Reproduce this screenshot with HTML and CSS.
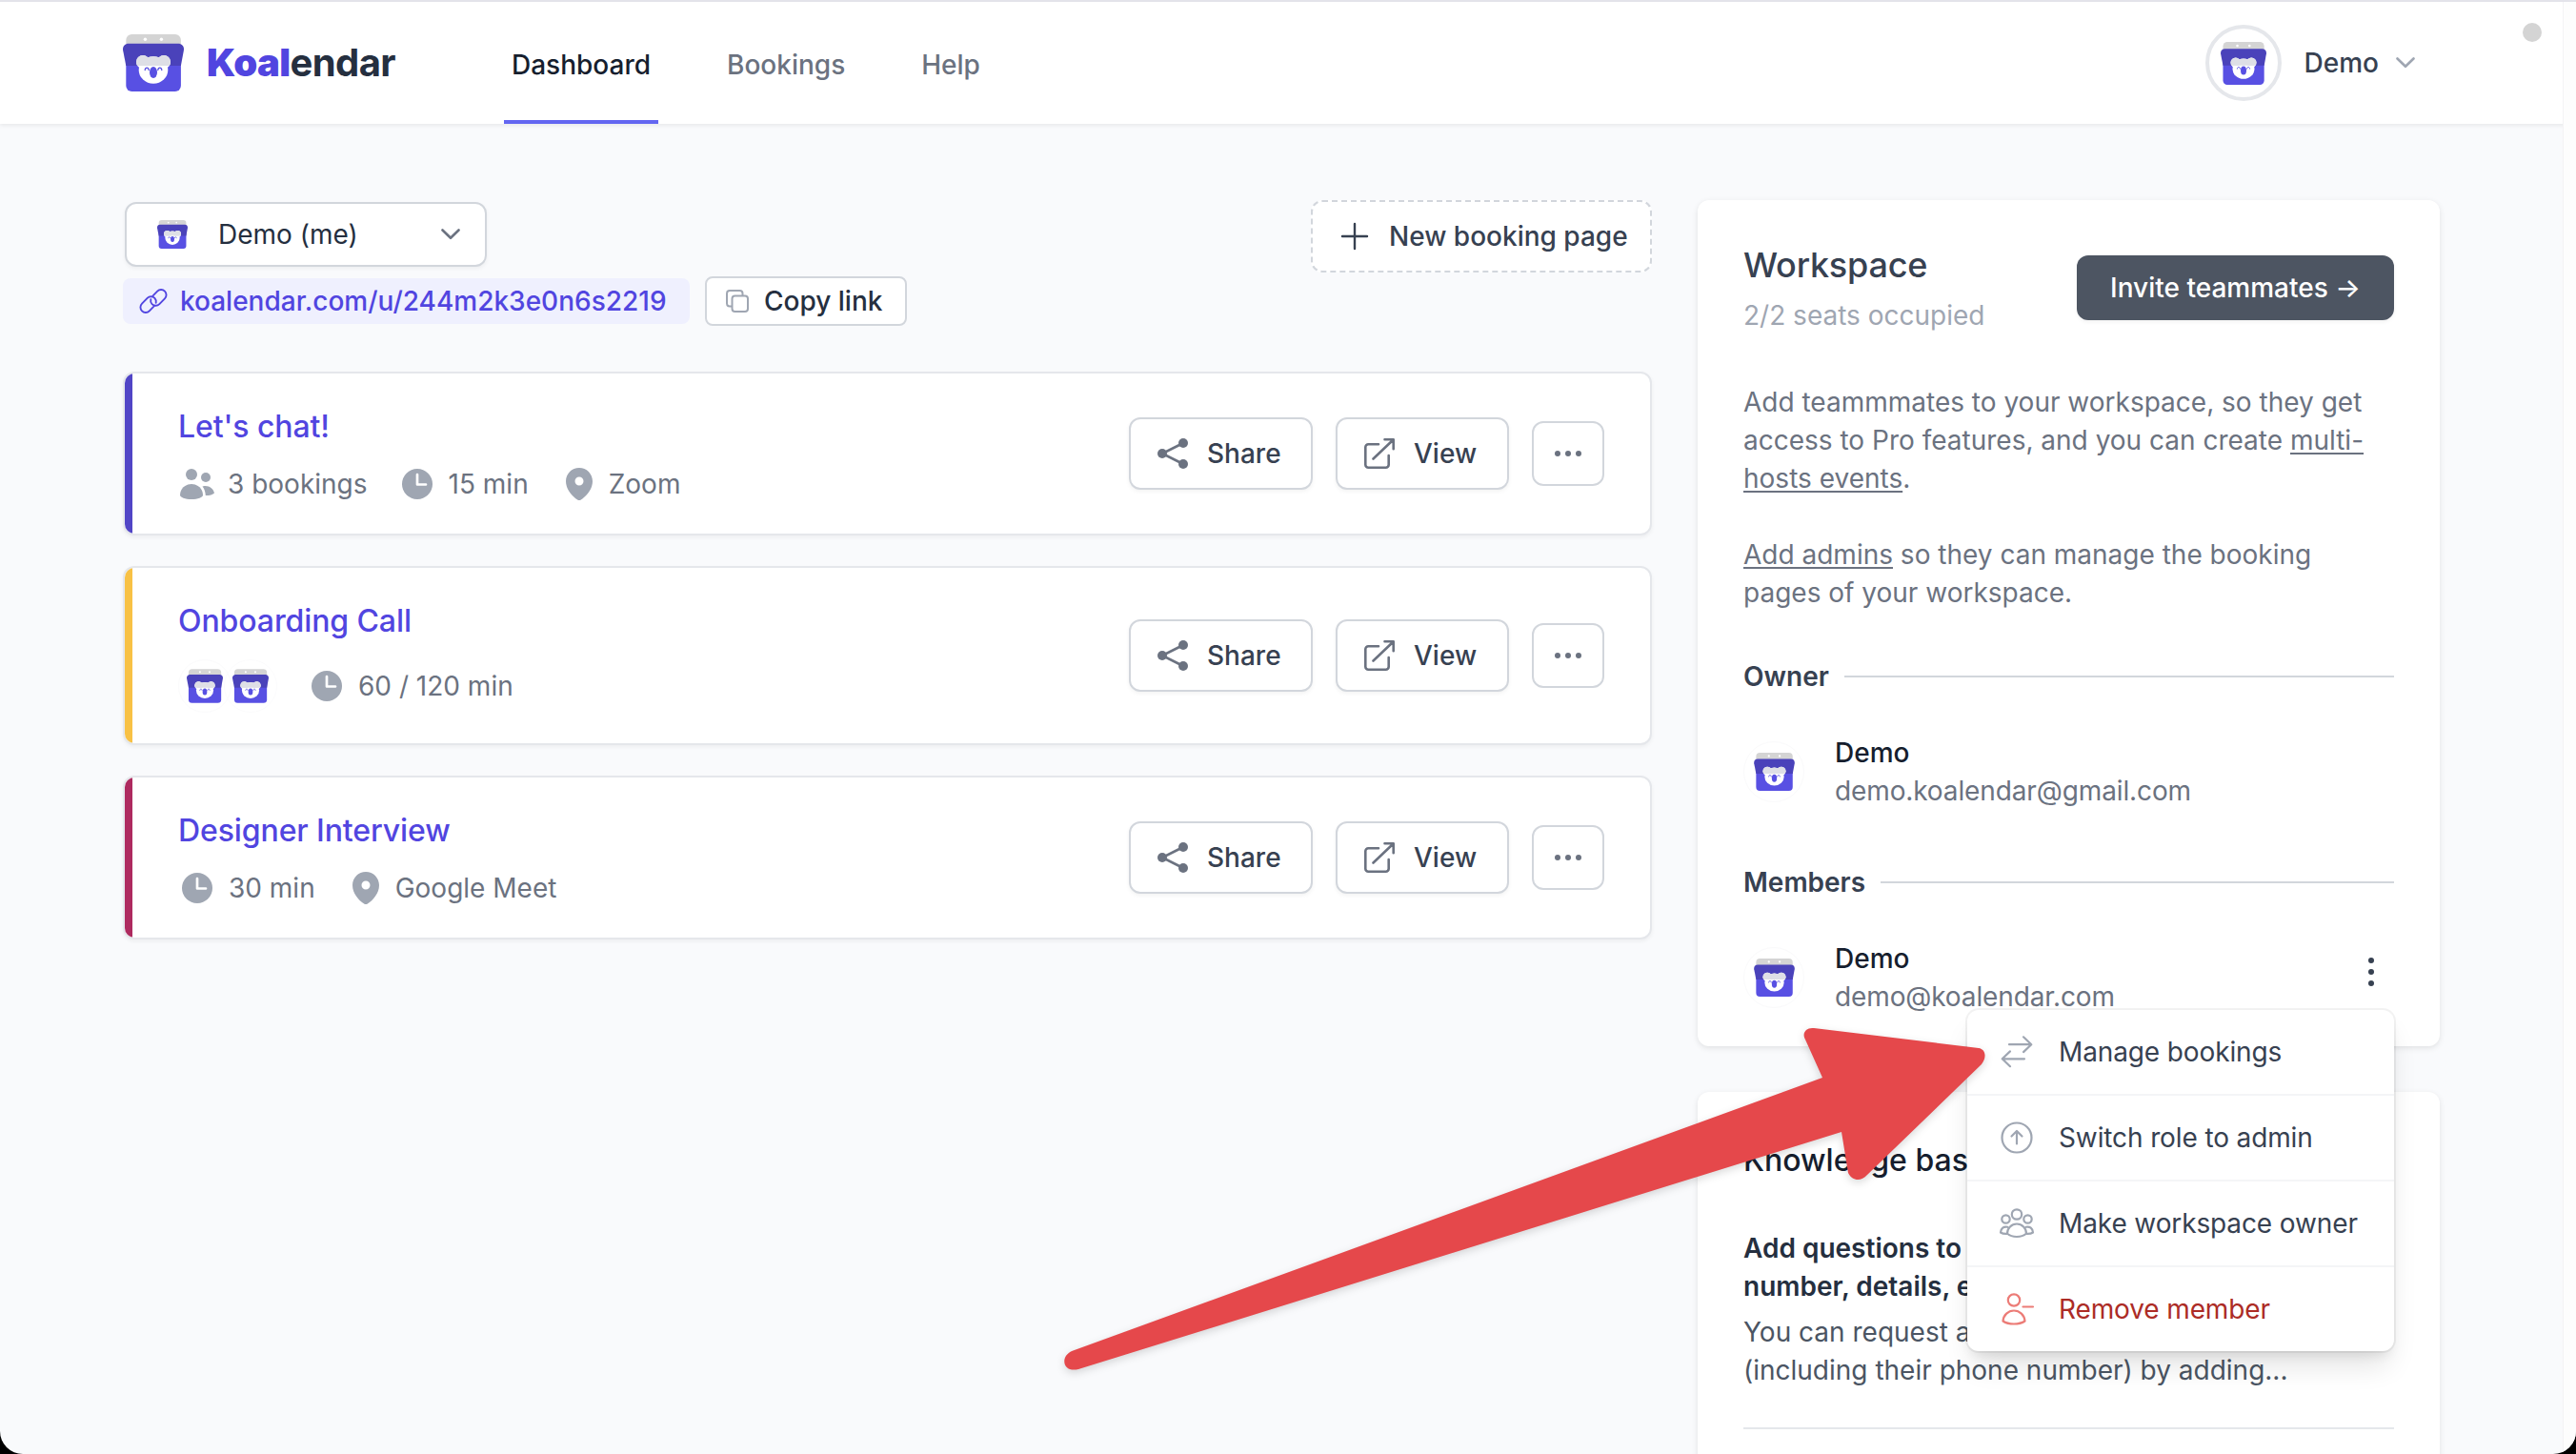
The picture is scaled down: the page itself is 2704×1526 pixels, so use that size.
FILE: index.html
```html
<!DOCTYPE html>
<html lang="en">
<head>
    <meta charset="UTF-8">
    <meta name="viewport" content="width=device-width, initial-scale=1.0">
    <title>Koalendar - Dashboard</title>
    <link rel="stylesheet" href="styles.css">
</head>
<body>
    <!-- Shared icons -->
    <svg class="sprite" width="0" height="0">
        <defs>
            <clipPath id="flap"><rect x="0" y="0" width="64" height="33"/></clipPath>
            <g id="koala">
                <ellipse cx="32" cy="37.5" rx="15.3" ry="14.3"/>
                <circle cx="21" cy="29" r="7"/>
                <circle cx="43" cy="29" r="7"/>
            </g>
            <symbol id="logo" viewBox="0 0 64 60">
                <rect x="3.3" y="0" width="57.6" height="20" rx="6" fill="#d4d4d4"/>
                <circle cx="23.4" cy="5.2" r="1.7" fill="#fff"/>
                <circle cx="40.4" cy="5.2" r="1.7" fill="#fff"/>
                <path d="M3.3 24h57.6v30a6 6 0 0 1-6 6H9.3a6 6 0 0 1-6-6z" fill="#5850e3"/>
                <path d="M6 9.7h52c4 0 6.500 3 5.900 7L60.900 33H3.300L.1 16.700C-.5 12.700 2 9.700 6 9.700z" fill="#4a42ba"/>
                <use href="#koala" fill="#fff"/>
                <use href="#koala" fill="#dedfe6" clip-path="url(#flap)"/>
                <ellipse cx="32" cy="40" rx="4" ry="6" fill="#5850e3"/>
                <path d="M23.200 37.500c.3-3.200 3.700-3.200 4 0M36.800 37.500c.3-3.200 3.700-3.200 4 0" fill="none" stroke="#5850e3" stroke-width="1.300" stroke-linecap="round"/>
            </symbol>
            <symbol id="chevron" viewBox="0 0 20 12">
                <path d="M1.500 1.500 10 9.800l8.500-8.300" fill="none" stroke="currentColor" stroke-width="2.600" stroke-linecap="round" stroke-linejoin="round"/>
            </symbol>
            <symbol id="users" viewBox="0 0 36 32">
                <circle cx="12" cy="6" r="6"/>
                <circle cx="27" cy="9" r="5"/>
                <path d="M12 16c6.600 0 12 5 12 11.500C24 30 18.600 32 12 32S0 30 0 27.500C0 21 5.400 16 12 16z"/>
                <path d="M24.500 18.200c6-1 10.500 2.600 11.500 7.300-1.500 1.600-5 2.600-9.200 2.600-.2-3.800-1.300-7-3.300-9.600z"/>
            </symbol>
            <symbol id="clock" viewBox="0 0 32 32">
                <circle cx="16" cy="16" r="16"/>
                <path d="M16 6v10.500h9" fill="none" stroke="#fff" stroke-width="2.700" stroke-linecap="round" stroke-linejoin="round"/>
            </symbol>
            <symbol id="pin" viewBox="0 0 28 34">
                <path fill-rule="evenodd" d="M14 0c7.700 0 14 6.200 14 14 0 8.500-6.500 16-12.200 19.400a3.200 3.200 0 0 1-3.600 0C6.500 30 0 22.500 0 14 0 6.200 6.300 0 14 0zm0 9.500a4.500 4.500 0 1 0 0 9 4.500 4.500 0 0 0 0-9z"/>
            </symbol>
            <symbol id="share" viewBox="0 0 32 32">
                <path d="M27 5 5 16l22 11" fill="none" stroke="currentColor" stroke-width="2.600"/>
                <circle cx="27" cy="5" r="5"/>
                <circle cx="5" cy="16" r="5"/>
                <circle cx="27" cy="27" r="5"/>
            </symbol>
            <symbol id="external" viewBox="0 0 32 32">
                <path d="M15 6.300H4.300a3 3 0 0 0-3 3v18.400a3 3 0 0 0 3 3h18.400a3 3 0 0 0 3-3V18M9.500 21.500 30.500 1.500M21.500 1.300h9.200v10" fill="none" stroke="currentColor" stroke-width="2.600" stroke-linecap="round" stroke-linejoin="round"/>
            </symbol>
        </defs>
    </svg>

    <div class="page">
        <header class="navbar">
            <a class="brand">
                <svg class="brand-logo"><use href="#logo"/></svg>
                <span class="brand-name"><b>Koal</b>endar</span>
            </a>
            <nav class="nav-links">
                <a class="nav-link active">Dashboard</a>
                <a class="nav-link">Bookings</a>
                <a class="nav-link">Help</a>
            </nav>
            <div class="account">
                <span class="account-avatar"><svg><use href="#logo"/></svg></span>
                <span>Demo</span>
                <svg class="chevron"><use href="#chevron"/></svg>
            </div>
        </header>

        <main class="content">
            <section class="bookings">
                <div class="toolbar">
                    <div class="profile">
                        <div class="select">
                            <svg class="select-logo"><use href="#logo"/></svg>
                            <span>Demo (me)</span>
                            <svg class="chevron"><use href="#chevron"/></svg>
                        </div>
                        <div class="links">
                            <a class="link-pill">
                                <svg viewBox="0 0 28 28">
                                    <path d="M13.300 8.200l5.200-5.300a5.800 5.800 0 0 1 8.300 0 5.900 5.900 0 0 1 0 8.300l-6 6.200a5.900 5.900 0 0 1-8.300 0 5.700 5.700 0 0 1-1.400-5.300M14.700 19.800l-5.200 5.300a5.800 5.800 0 0 1-8.300 0 5.900 5.900 0 0 1 0-8.300l6-6.200a5.900 5.900 0 0 1 8.300 0 5.700 5.700 0 0 1 1.400 5.300" transform="translate(.9 .9) scale(.935)"/>
                                </svg>
                                <span>koalendar.com/u/244m2k3e0n6s2219</span>
                            </a>
                            <button class="copy">
                                <svg viewBox="0 0 24 24">
                                    <path d="M6.500 17.500H4a3 3 0 0 1-3-3V4a3 3 0 0 1 3-3h10.500a3 3 0 0 1 3 3v2.500"/>
                                    <rect x="6.500" y="6.500" width="16.500" height="16.500" rx="3"/>
                                </svg>
                                <span>Copy link</span>
                            </button>
                        </div>
                    </div>
                    <button class="new-page">
                        <svg viewBox="0 0 28 28"><path d="M14 1v26M1 14h26"/></svg>
                        <span>New booking page</span>
                    </button>
                </div>

                <div class="cards">
                    <article class="card indigo">
                        <div>
                            <h2>Let's chat!</h2>
                            <div class="meta">
                                <span class="meta-item"><svg class="i-users"><use href="#users"/></svg>3 bookings</span>
                                <span class="meta-item"><svg class="i-clock"><use href="#clock"/></svg>15 min</span>
                                <span class="meta-item"><svg class="i-pin"><use href="#pin"/></svg>Zoom</span>
                            </div>
                        </div>
                        <div class="actions">
                            <button class="btn share"><svg><use href="#share"/></svg>Share</button>
                            <button class="btn view"><svg><use href="#external"/></svg>View</button>
                            <button class="btn more"><i></i><i></i><i></i></button>
                        </div>
                    </article>

                    <article class="card yellow">
                        <div>
                            <h2>Onboarding Call</h2>
                            <div class="meta tall">
                                <span class="hosts">
                                    <span class="host"><svg><use href="#logo"/></svg></span>
                                    <span class="host"><svg><use href="#logo"/></svg></span>
                                </span>
                                <span class="meta-item"><svg class="i-clock"><use href="#clock"/></svg>60 / 120 min</span>
                            </div>
                        </div>
                        <div class="actions">
                            <button class="btn share"><svg><use href="#share"/></svg>Share</button>
                            <button class="btn view"><svg><use href="#external"/></svg>View</button>
                            <button class="btn more"><i></i><i></i><i></i></button>
                        </div>
                    </article>

                    <article class="card red">
                        <div>
                            <h2>Designer Interview</h2>
                            <div class="meta">
                                <span class="meta-item"><svg class="i-clock"><use href="#clock"/></svg>30 min</span>
                                <span class="meta-item"><svg class="i-pin"><use href="#pin"/></svg>Google Meet</span>
                            </div>
                        </div>
                        <div class="actions">
                            <button class="btn share"><svg><use href="#share"/></svg>Share</button>
                            <button class="btn view"><svg><use href="#external"/></svg>View</button>
                            <button class="btn more"><i></i><i></i><i></i></button>
                        </div>
                    </article>
                </div>
            </section>

            <aside class="sidebar">
                <section class="panel workspace">
                    <div class="panel-head">
                        <div>
                            <h3>Workspace</h3>
                            <p class="seats">2/2 seats occupied</p>
                        </div>
                        <button class="invite">Invite teammates →</button>
                    </div>
                    <div class="about">
                        <p>Add teammmates to your workspace, so they get<br>access to Pro features, and you can create <a>multi-<br>hosts events</a>.</p>
                        <p><a>Add admins</a> so they can manage the booking<br>pages of your workspace.</p>
                    </div>
                    <div class="divider-title"><span>Owner</span></div>
                    <div class="person">
                        <span class="person-avatar"><svg><use href="#logo"/></svg></span>
                        <div>
                            <p class="name">Demo</p>
                            <p class="email">demo.koalendar@gmail.com</p>
                        </div>
                    </div>
                    <div class="divider-title"><span>Members</span></div>
                    <div class="person">
                        <span class="person-avatar"><svg><use href="#logo"/></svg></span>
                        <div>
                            <p class="name">Demo</p>
                            <p class="email">demo@koalendar.com</p>
                        </div>
                        <button class="kebab"><i></i><i></i><i></i></button>
                        <ul class="menu">
                            <li>
                                <svg viewBox="0 0 36 36"><path d="M10 13.200h23M25 5.300l8.300 7.900-8.300 7.900M26 28.300H3M11 20.400l-8.300 7.900 8.300 7.900" transform="translate(0 -3)"/></svg>
                                <span>Manage bookings</span>
                            </li>
                            <li>
                                <svg viewBox="0 0 36 36"><circle cx="18" cy="18" r="15.500"/><path d="M18 24.500v-13M12.500 16.500l5.500-5.500 5.500 5.500"/></svg>
                                <span>Switch role to admin</span>
                            </li>
                            <li>
                                <svg viewBox="0 0 36 36">
                                    <circle cx="18" cy="8.500" r="5.200"/><circle cx="6.500" cy="13.500" r="4.200"/><circle cx="29.500" cy="13.500" r="4.200"/>
                                    <path d="M18 18.500c5.500 0 10 4.500 10 10-2.500 2.300-6 3.500-10 3.500s-7.500-1.200-10-3.500c0-5.500 4.500-10 10-10zM8.300 21.800c-4-.9-7 1.500-7.300 5.700 1.600 1 3.800 1.500 6.800 1.300M27.700 21.800c4-.9 7 1.500 7.300 5.700-1.600 1-3.800 1.500-6.800 1.300"/>
                                </svg>
                                <span>Make workspace owner</span>
                            </li>
                            <li class="danger">
                                <svg viewBox="0 0 36 36"><circle cx="15" cy="8.500" r="6.200"/><path d="M15 19.500c6 0 11 4.600 11.500 11-3 2-7 3-11.500 3s-8.500-1-11.500-3c.5-6.400 5.500-11 11.500-11zM24.500 15.500H35"/></svg>
                                <span>Remove member</span>
                            </li>
                        </ul>
                    </div>
                </section>

                <section class="panel knowledge">
                    <h3>Knowledge base</h3>
                    <div class="article">
                        <h4>Add questions to your form: phone<br>number, details, etc.</h4>
                        <p>You can request any details from invitees<br>(including their phone number) by adding...</p>
                    </div>
                </section>
            </aside>
        </main>

        <div class="scroll-track"></div>
        <span class="status-dot"></span>

        <!-- Pointer to the "Manage bookings" entry -->
        <svg class="arrow" viewBox="0 0 980 380">
            <path d="M15 348 803 61 785 21C781 14 786 8 794 9L967 30C974 31 976 39 970 47L850 163C843 171 834 169 830 161L823 118 22 367C6 371 2 354 15 348Z"/>
        </svg>
    </div>
</body>
</html>
```

FILE: styles.css
```css
* {
    margin: 0;
    padding: 0;
    box-sizing: border-box;
}

html {
    background: #000;
}

body {
    font-family: Inter, "Liberation Sans", sans-serif;
    font-size: 28px;
    line-height: 40px;
    color: #6b7280;
    overflow: hidden;
}

button {
    font: inherit;
    font-weight: 500;
    background: #fff;
    border: 2px solid #d2d6dc;
    cursor: pointer;
}

svg {
    display: block;
    flex-shrink: 0;
    overflow: visible;
}

.sprite {
    position: absolute;
}

.page {
    position: relative;
    height: 1526px;
    background: #f9fafc;
    border-top: 2px solid #e3e3ea;
    border-radius: 0 0 24px 24px;
    overflow: hidden;
}

/* Header */
.navbar {
    display: flex;
    align-items: center;
    height: 128px;
    padding: 0 169px 0 129px;
    background: #fff;
    box-shadow: 0 2px 4px rgba(0, 0, 0, 0.07);
}

.brand {
    display: flex;
    align-items: center;
    gap: 24px;
    width: 400px;
}

.brand-logo {
    width: 64px;
    height: 60px;
}

.brand-name {
    font-size: 40px;
    font-weight: 700;
    letter-spacing: -0.6px;
    color: #252f3f;
}

.brand-name b {
    color: #5145e0;
}

.nav-links {
    display: flex;
    align-self: stretch;
    gap: 64px;
}

.nav-link {
    padding: 6px 8px 0;
    font-weight: 500;
    line-height: 120px;
    border-bottom: 4px solid transparent;
}

.nav-link.active {
    color: #161e2e;
    border-color: #6366f1;
}

.account {
    display: flex;
    align-items: center;
    margin-left: auto;
    color: #374151;
    font-weight: 500;
}

.account-avatar {
    display: flex;
    align-items: center;
    justify-content: center;
    width: 80px;
    height: 80px;
    margin-right: 24px;
    border: 4px solid #e5e7eb;
    border-radius: 50%;
}

.account-avatar svg {
    width: 48px;
    height: 45px;
}

.chevron {
    width: 20px;
    height: 12px;
    margin-left: 18px;
    color: #9fa6b2;
}

/* Layout */
.content {
    display: flex;
    align-items: flex-start;
    gap: 48px;
    padding: 80px 0 0 130px;
}

.bookings {
    width: 1604px;
}

.sidebar {
    display: flex;
    flex-direction: column;
    gap: 48px;
    width: 779px;
}

/* Toolbar */
.toolbar {
    display: flex;
    justify-content: space-between;
    align-items: flex-start;
}

.select {
    display: flex;
    align-items: center;
    width: 380px;
    height: 68px;
    margin: 2px 0 10px 1px;
    padding: 0 26px 0 32px;
    background: #fff;
    border: 2px solid #d2d6dc;
    border-radius: 12px;
    box-shadow: 0 2px 4px rgba(0, 0, 0, 0.05);
    color: #252f3f;
}

.select-logo {
    width: 32px;
    height: 30px;
    margin-right: 32px;
}

.select .chevron {
    margin-left: auto;
    color: #6b7280;
}

.links {
    display: flex;
    align-items: center;
    gap: 16px;
    margin-left: -1px;
}

.link-pill {
    display: flex;
    align-items: center;
    gap: 14px;
    width: 595px;
    height: 48px;
    padding-left: 18px;
    background: #eff0fe;
    border-radius: 8px;
    color: #5145e0;
    font-weight: 500;
    white-space: nowrap;
}

.link-pill svg {
    width: 28px;
    height: 28px;
    fill: none;
    stroke: currentColor;
    stroke-width: 2;
    stroke-linecap: round;
}

.copy {
    display: flex;
    align-items: center;
    gap: 16px;
    width: 212px;
    height: 52px;
    padding-left: 20px;
    border-radius: 8px;
    color: #252f3f;
    white-space: nowrap;
}

.copy svg {
    width: 24px;
    height: 24px;
    fill: none;
    stroke: #9fa6b2;
    stroke-width: 2;
}

.new-page {
    display: flex;
    align-items: center;
    gap: 22px;
    width: 358px;
    height: 76px;
    padding-left: 30px;
    border-style: dashed;
    border-radius: 12px;
    color: #374151;
    white-space: nowrap;
}

.new-page svg {
    width: 28px;
    height: 28px;
    stroke: currentColor;
    stroke-width: 2.4;
    stroke-linecap: round;
}

/* Booking cards */
.cards {
    display: flex;
    flex-direction: column;
    gap: 32px;
    margin: 48px 0 0 -1px;
}

.card {
    position: relative;
    display: flex;
    justify-content: space-between;
    align-items: center;
    padding: 34px 48px 32px 56px;
    background: #fff;
    border: 2px solid #e5e7eb;
    border-radius: 12px;
    box-shadow: 0 2px 4px rgba(0, 0, 0, 0.05);
    overflow: hidden;
}

.card::before {
    content: '';
    position: absolute;
    top: 0;
    bottom: 0;
    left: 0;
    width: 8px;
}

.card.indigo::before { background: #5145c6; }
.card.yellow::before { background: #f8c145; }
.card.red::before { background: #ae2a5f; }

.card h2 {
    font-size: 32px;
    line-height: 44px;
    font-weight: 500;
    letter-spacing: -0.1px;
    color: #5145e0;
}

.meta {
    display: flex;
    align-items: center;
    height: 40px;
    margin-top: 18px;
    gap: 32px;
}

.meta.tall {
    height: 56px;
}

.meta-item {
    display: flex;
    align-items: center;
    white-space: nowrap;
}

.meta-item svg {
    fill: #9fa6b2;
    margin-right: 17px;
}

.i-users { width: 36px; height: 32px; margin-left: 2px; }
.i-clock { width: 32px; height: 32px; margin-left: 4px; }
.i-pin { width: 28px; height: 34px; margin-left: 7px; }

.meta-item .i-users {
    margin-right: 14px;
}

.hosts {
    display: flex;
}

.host {
    display: flex;
    align-items: center;
    justify-content: center;
    width: 56px;
    height: 56px;
    border: 1px solid #fbfbfc;
    border-radius: 50%;
}

.host + .host {
    margin-left: -8px;
}

.host svg {
    width: 38px;
    height: 36px;
}

.actions {
    display: flex;
    align-items: center;
    gap: 24px;
    margin-top: -2px;
}

.btn {
    display: flex;
    align-items: center;
    height: 76px;
    padding-left: 28px;
    border-radius: 12px;
    box-shadow: 0 2px 4px rgba(0, 0, 0, 0.05);
    color: #374151;
}

.btn svg {
    width: 32px;
    height: 32px;
    margin-right: 20px;
    color: #6b7280;
    fill: currentColor;
}

.share { width: 193px; }
.view { width: 182px; }

.more {
    justify-content: center;
    gap: 5px;
    width: 76px;
    height: 68px;
    padding: 0;
    box-shadow: none;
}

.more i {
    width: 6px;
    height: 6px;
    border-radius: 50%;
    background: #6b7280;
}

/* Sidebar panels */
.panel {
    padding: 48px;
    background: #fff;
    border-radius: 12px;
    box-shadow: 0 2px 6px rgba(0, 0, 0, 0.1);
}

.workspace {
    height: 888px;
}

.panel-head {
    display: flex;
    justify-content: space-between;
    align-items: center;
}

.panel-head h3 {
    font-size: 36px;
    line-height: 40px;
    font-weight: 500;
    letter-spacing: -0.2px;
    color: #374151;
}

.seats {
    margin-top: 13px;
    color: #9fa6b2;
}

.invite {
    width: 333px;
    height: 68px;
    margin-bottom: 5px;
    background: #4d5562;
    border: 0;
    border-radius: 12px;
    box-shadow: 0 2px 4px rgba(0, 0, 0, 0.05);
    color: #fff;
    white-space: nowrap;
}

.about {
    display: flex;
    flex-direction: column;
    gap: 40px;
    margin: 51px 0 48px;
    white-space: nowrap;
}

.about a {
    text-decoration: underline;
    text-decoration-thickness: 2px;
    text-underline-offset: 3px;
}

.divider-title {
    display: flex;
    align-items: center;
    gap: 16px;
    font-weight: 600;
    color: #374151;
}

.divider-title::after {
    content: '';
    flex: 1;
    height: 2px;
    background: #d2d6dc;
}

.person {
    position: relative;
    display: flex;
    align-items: center;
    gap: 32px;
    margin: 40px 0 56px;
}

.person-avatar {
    display: flex;
    align-items: center;
    justify-content: center;
    width: 64px;
    height: 64px;
    border: 1px solid #fafafb;
    border-radius: 50%;
}

.person-avatar svg {
    width: 43px;
    height: 40px;
}

.name {
    font-weight: 500;
    color: #161e2e;
}

.email {
    letter-spacing: -0.12px;
}

.kebab {
    display: flex;
    flex-direction: column;
    align-items: center;
    gap: 6px;
    width: 48px;
    margin: -12px 0 0 auto;
    border: 0;
}

.kebab i {
    width: 6px;
    height: 6px;
    border-radius: 50%;
    background: #374151;
}

/* Member menu */
.menu {
    position: absolute;
    top: 74px;
    right: 0;
    z-index: 10;
    width: 448px;
    background: #fff;
    border-radius: 12px;
    box-shadow: 0 0 0 2px rgba(0, 0, 0, 0.05), 0 20px 30px -6px rgba(0, 0, 0, 0.12), 0 8px 12px -4px rgba(0, 0, 0, 0.08);
    color: #374151;
    letter-spacing: -0.12px;
    list-style: none;
    white-space: nowrap;
}

.menu li {
    display: flex;
    align-items: center;
    gap: 26px;
    height: 90px;
    padding-left: 34px;
    border-bottom: 2px solid #f4f5f7;
}

.menu li:last-child {
    height: 88px;
    border-bottom: 0;
}

.menu svg {
    width: 36px;
    height: 36px;
    fill: none;
    stroke: #9fa6b2;
    stroke-width: 2.2;
    stroke-linecap: round;
    stroke-linejoin: round;
}

.menu .danger {
    color: #ac2c26;
}

.danger svg {
    stroke: #ec7c77;
}

/* Knowledge base */
.knowledge h3 {
    padding-top: 2px;
    margin-bottom: 50px;
    font-size: 32px;
    font-weight: 500;
    color: #161e2e;
    line-height: 44px;
}

.article {
    height: 210px;
    border-bottom: 2px solid #e5e7eb;
    white-space: nowrap;
}

.article h4 {
    margin-bottom: 8px;
    font-weight: 600;
    color: #252f3f;
}

.article p {
    color: #4b5563;
}

/* Overlays */
.scroll-track {
    position: absolute;
    top: 0;
    right: 0;
    width: 14px;
    height: 100%;
    background: #fdfdfd;
    border-left: 1px solid #f3f3f5;
}

.status-dot {
    position: absolute;
    top: 22px;
    right: 36px;
    width: 20px;
    height: 20px;
    border-radius: 50%;
    background: #d4d4d4;
}

.arrow {
    position: absolute;
    left: 1110px;
    top: 1068px;
    z-index: 20;
    width: 980px;
    height: 380px;
    fill: #e5484b;
    filter: drop-shadow(0 3px 4px rgba(0, 0, 0, 0.15));
}
```
